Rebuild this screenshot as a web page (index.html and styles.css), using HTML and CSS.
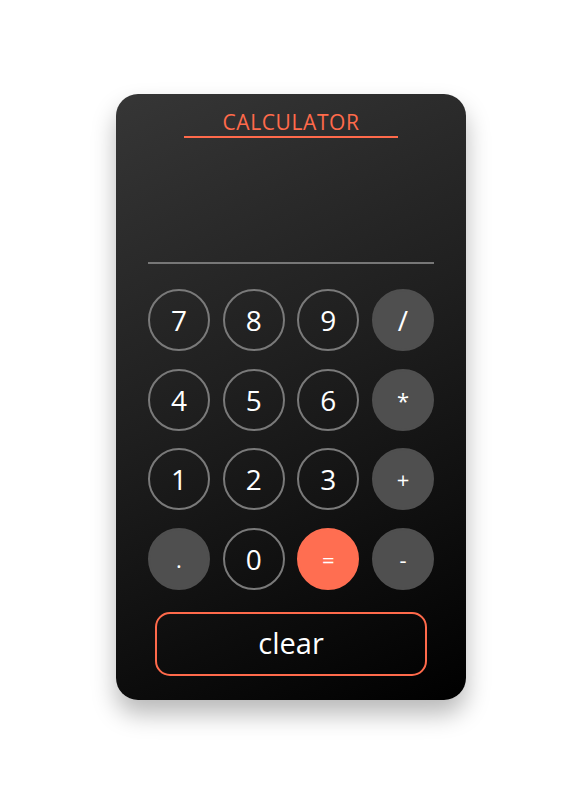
FILE: index.html
```html
<!DOCTYPE html>
<html>
<head>
<meta charset="utf-8">
<link rel="stylesheet" href="styles.css">
</head>
<body>
<div class="page">
  <div class="calc">
    <div class="title">CALCULATOR</div>
    <div class="display"></div>
    <div class="keys">
      <button class="key">7</button>
      <button class="key">8</button>
      <button class="key">9</button>
      <button class="key op">/</button>
      <button class="key">4</button>
      <button class="key">5</button>
      <button class="key">6</button>
      <button class="key op small">*</button>
      <button class="key">1</button>
      <button class="key">2</button>
      <button class="key">3</button>
      <button class="key op small">+</button>
      <button class="key op small">.</button>
      <button class="key">0</button>
      <button class="key eq small">=</button>
      <button class="key op small">-</button>
    </div>
    <button class="clear">clear</button>
  </div>
</div>
</body>
</html>
```
FILE: styles.css
```css
* { box-sizing: border-box; }
html, body { margin: 0; padding: 0; background: #fff; }
.page {
  width: 588px;
  height: 810px;
  padding-top: 94px;
  padding-left: 116px;
}
.calc {
  width: 350px;
  height: 606px;
  border-radius: 22px;
  background: linear-gradient(155deg, #363636 0%, #1f1f1f 45%, #000 100%);
  box-shadow: 0 14px 24px rgba(0,0,0,0.28);
  display: flex;
  flex-direction: column;
  align-items: center;
  padding: 15px 32px 0;
  font-family: "Open Sans", "Liberation Sans", sans-serif;
}
.title {
  width: 214px;
  text-align: center;
  color: #ff6a4b;
  font-size: 21px;
  line-height: 27px;
  letter-spacing: 0.6px;
  border-bottom: 2px solid #ff6a4b;
}
.display {
  width: 286px;
  height: 126px;
  border-bottom: 2px solid #777;
}
.keys {
  width: 286px;
  margin-top: 25px;
  display: grid;
  grid-template-columns: repeat(4, 62px);
  justify-content: space-between;
  row-gap: 17.7px;
}
.key {
  width: 62px;
  height: 62px;
  border-radius: 50%;
  border: 2px solid #7a7a7a;
  background: transparent;
  color: #fff;
  font-family: inherit;
  font-size: 28px;
  padding: 0;
  display: flex;
  align-items: center;
  justify-content: center;
}
.key.op {
  background: #4f4f4f;
  border-color: #4f4f4f;
}
.key.eq {
  background: #ff6e51;
  border-color: #ff6e51;
}
.key.small { font-size: 22px; }
.clear {
  margin-top: 22px;
  width: 272px;
  height: 64px;
  border: 2px solid #ff6a4b;
  border-radius: 15px;
  background: transparent;
  color: #fff;
  font-family: inherit;
  font-size: 29px;
  padding: 0 0 3px;
}
```
